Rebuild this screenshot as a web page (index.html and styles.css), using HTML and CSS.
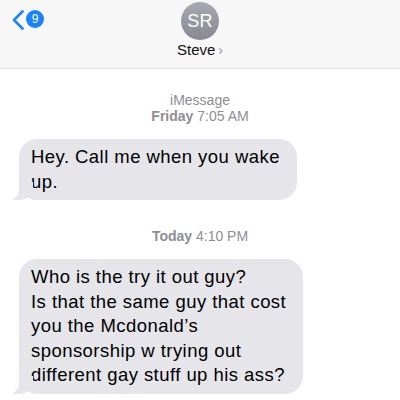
FILE: index.html
```html
<!DOCTYPE html>
<html>
<head>
<meta charset="utf-8">
<link rel="stylesheet" href="styles.css">
</head>
<body>
<div class="screen">
  <header class="nav">
    <div class="back">
      <svg class="chev" width="14" height="20" viewBox="0 0 14 20"><path d="M11.5 1.5 L3 10 L11.5 18.5" fill="none" stroke="#1a82fb" stroke-width="2.6" stroke-linecap="round" stroke-linejoin="round"/></svg>
      <span class="badge">9</span>
    </div>
    <div class="contact">
      <div class="avatar">SR</div>
      <div class="name">Steve<span class="more">&#8250;</span></div>
    </div>
    <div></div>
  </header>
  <main class="thread">
    <div class="stamp"><div>iMessage</div><div><b>Friday</b> 7:05 AM</div></div>
    <div class="bubble">Hey. Call me when you wake<br>up.</div>
    <div class="stamp stamp2"><div><b>Today</b> 4:10 PM</div></div>
    <div class="bubble">Who is the try it out guy?<br>Is that the same guy that cost<br>you the Mcdonald’s<br>sponsorship w trying out<br>different gay stuff up his ass?</div>
  </main>
</div>
</body>
</html>
```
FILE: styles.css
```css
* { box-sizing: border-box; }
html, body { margin: 0; padding: 0; background: #fff; }
body { font-family: "Liberation Sans", Arial, sans-serif; }
.screen { width: 400px; height: 400px; overflow: hidden; }
.nav {
  height: 69px;
  background: #f7f7f7;
  border-bottom: 1px solid #e0e0e0;
  display: grid;
  grid-template-columns: 1fr auto 1fr;
  padding-top: 2px;
}
.back { display: flex; align-items: center; height: 34px; padding-left: 11px; gap: 1px; align-self: start; }
.chev { display: block; margin-top: 1px; }
.badge {
  width: 18px; height: 18px; border-radius: 50%;
  background: #1a82fb; color: #fff;
  font-size: 12px; line-height: 18px; text-align: center;
}
.contact { display: flex; flex-direction: column; align-items: center; }
.avatar {
  width: 38px; height: 38px; border-radius: 50%;
  background: linear-gradient(#a7a8b0, #878891);
  color: #fff; font-size: 18px; line-height: 38px; text-align: center;
  letter-spacing: 0.3px;
}
.name { margin-top: 1px; font-size: 15px; line-height: 18px; color: #111; }
.more { color: #9a9aa0; font-size: 14px; margin-left: 3px; }
.thread { padding: 23px 0 0 19px; display: flex; flex-direction: column; align-items: flex-start; }
.stamp { align-self: stretch; padding-right: 19px; text-align: center; color: #8e8e93; font-size: 14px; line-height: 16px; margin-bottom: 15px; }
.stamp b { font-weight: 600; }
.stamp2 { margin-top: 28px; }
.bubble {
  position: relative;
  background: #e5e5ea;
  color: #000;
  font-size: 18.5px;
  letter-spacing: 0.45px;
  line-height: 24.5px;
  padding: 6px 17px 6px 12px;
  border-radius: 18px;
  white-space: nowrap;
}
.bubble::before {
  content: "";
  position: absolute;
  left: -6px; bottom: 0;
  width: 20px; height: 18px;
  background: #e5e5ea;
  border-bottom-right-radius: 14px 14px;
}
.bubble::after {
  content: "";
  position: absolute;
  left: -10px; bottom: 0;
  width: 10px; height: 20px;
  background: #fff;
  border-bottom-right-radius: 10px;
}
```
